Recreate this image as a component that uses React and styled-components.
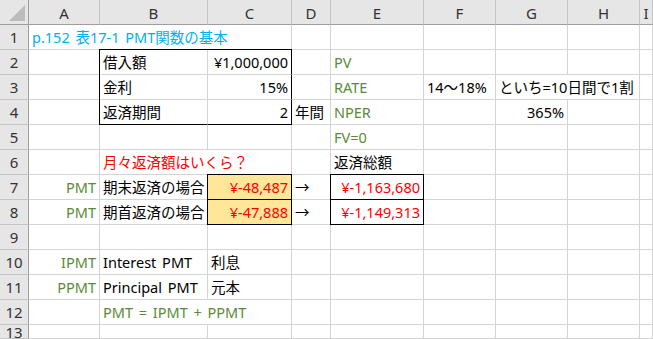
import React from "react";
import styled, { createGlobalStyle, css } from "styled-components";

const GlobalStyle = createGlobalStyle`
  html, body {
    margin: 0;
    padding: 0;
    background: #fff;
    overflow: hidden;
  }
`;

const GRID = "#d4d4d4";
const HEAD_BG = "#e6e6e6";
const HEAD_LINE = "#c4c4c4";
const HEAD_EDGE = "#9e9e9e";

const TEXT = {
  black: "#000",
  blue: "#00b0f0",
  green: "#5a8a38",
  red: "#ff0000",
};

const Sheet = styled.div`
  display: grid;
  grid-template-columns: 29px 71px 108px 84px 39px 93px 72px 72px 72px 1fr;
  grid-template-rows: repeat(13, 25px) 14px;
  width: 653px;
  height: 339px;
  overflow: hidden;
  font-family: "Noto Sans", "Noto Sans CJK JP", sans-serif;
  font-size: 14.5px;
  word-spacing: 2px;
`;

const Corner = styled.div`
  position: relative;
  background: ${HEAD_BG};
  border-right: 1px solid ${HEAD_EDGE};
  border-bottom: 1px solid ${HEAD_EDGE};
  box-sizing: border-box;
`;

const CornerMark = styled.svg`
  position: absolute;
  right: 3px;
  bottom: 3px;
`;

const ColHead = styled.div`
  display: flex;
  align-items: center;
  justify-content: center;
  background: ${HEAD_BG};
  border-right: 1px solid ${HEAD_LINE};
  border-bottom: 1px solid ${HEAD_EDGE};
  box-sizing: border-box;
  color: #333;
  font-family: "Noto Sans", sans-serif;
  font-size: 15px;
  padding-top: 1px;
`;

const RowHead = styled.div`
  display: flex;
  align-items: center;
  justify-content: center;
  background: ${HEAD_BG};
  border-right: 1px solid ${HEAD_EDGE};
  border-bottom: 1px solid ${HEAD_LINE};
  box-sizing: border-box;
  color: #333;
  font-family: "Noto Sans", sans-serif;
  font-size: 15px;
`;

const Cell = styled.div`
  display: flex;
  align-items: center;
  justify-content: ${(p) => (p.$align === "right" ? "flex-end" : "flex-start")};
  grid-column: span ${(p) => p.$span || 1};
  box-sizing: border-box;
  padding: 0 3px 1px 3px;
  white-space: nowrap;
  overflow: visible;
  color: ${(p) => TEXT[p.$color || "black"]};
  background: ${(p) => (p.$fill ? "#ffe699" : "transparent")};
  border-right: 1px solid ${(p) => (p.$br ? "#000" : GRID)};
  border-bottom: 1px solid ${(p) => (p.$bb ? "#000" : GRID)};
  ${(p) => {
    const s = [];
    if (p.$bl) s.push("-1px 0 0 #000");
    if (p.$bt) s.push("0 -1px 0 #000");
    if (p.$bl && p.$bt) s.push("-1px -1px 0 #000");
    return s.length ? css`box-shadow: ${s.join(", ")};` : "";
  }}
`;

const COLS = ["A", "B", "C", "D", "E", "F", "G", "H", "I"];

const boxAll = { bt: true, bl: true, br: true, bb: true };

const rows = {
  1: { A: { text: "p.152 表17-1 PMT関数の基本", color: "blue", span: 3 } },
  2: {
    B: { text: "借入額", bt: true, bl: true },
    C: { text: "¥1,000,000", align: "right", bt: true, br: true },
    E: { text: "PV", color: "green" },
  },
  3: {
    B: { text: "金利", bl: true },
    C: { text: "15%", align: "right", br: true },
    E: { text: "RATE", color: "green" },
    F: { text: "14～18%" },
    G: { text: "といち=10日間で1割", span: 2 },
  },
  4: {
    B: { text: "返済期間", bl: true, bb: true },
    C: { text: "2", align: "right", br: true, bb: true },
    D: { text: "年間" },
    E: { text: "NPER", color: "green" },
    G: { text: "365%", align: "right" },
  },
  5: { E: { text: "FV=0", color: "green" } },
  6: {
    B: { text: "月々返済額はいくら？", color: "red", span: 2 },
    E: { text: "返済総額" },
  },
  7: {
    A: { text: "PMT", color: "green", align: "right" },
    B: { text: "期末返済の場合" },
    C: { text: "¥-48,487", color: "red", align: "right", fill: true, ...boxAll },
    D: { text: "→" },
    E: { text: "¥-1,163,680", color: "red", align: "right", ...boxAll },
  },
  8: {
    A: { text: "PMT", color: "green", align: "right" },
    B: { text: "期首返済の場合" },
    C: { text: "¥-47,888", color: "red", align: "right", fill: true, ...boxAll },
    D: { text: "→" },
    E: { text: "¥-1,149,313", color: "red", align: "right", ...boxAll },
  },
  10: {
    A: { text: "IPMT", color: "green", align: "right" },
    B: { text: "Interest PMT" },
    C: { text: "利息" },
  },
  11: {
    A: { text: "PPMT", color: "green", align: "right" },
    B: { text: "Principal PMT" },
    C: { text: "元本" },
  },
  12: { B: { text: "PMT = IPMT + PPMT", color: "green", span: 2 } },
};

const SheetRow = ({ n }) => {
  const data = rows[n] || {};
  const cells = [];
  let i = 0;
  while (i < COLS.length) {
    const col = COLS[i];
    const c = data[col] || {};
    cells.push(
      <Cell
        key={col}
        $span={c.span}
        $align={c.align}
        $color={c.color}
        $fill={c.fill}
        $bt={c.bt}
        $bl={c.bl}
        $br={c.br}
        $bb={c.bb}
      >
        {c.text}
      </Cell>
    );
    i += c.span || 1;
  }
  return (
    <>
      <RowHead>{n}</RowHead>
      {cells}
    </>
  );
};

const App = () => {
  const rowNums = Array.from({ length: 13 }, (_, k) => k + 1);
  return (
    <>
      <GlobalStyle />
      <Sheet>
        <Corner>
          <CornerMark width="16" height="16" viewBox="0 0 16 16">
            <polygon points="16,0 16,16 0,16" fill="#bcbcbc" />
          </CornerMark>
        </Corner>
        {COLS.map((c) => (
          <ColHead key={c}>{c}</ColHead>
        ))}
        {rowNums.map((n) => (
          <SheetRow key={n} n={n} />
        ))}
      </Sheet>
    </>
  );
};

export default App;
